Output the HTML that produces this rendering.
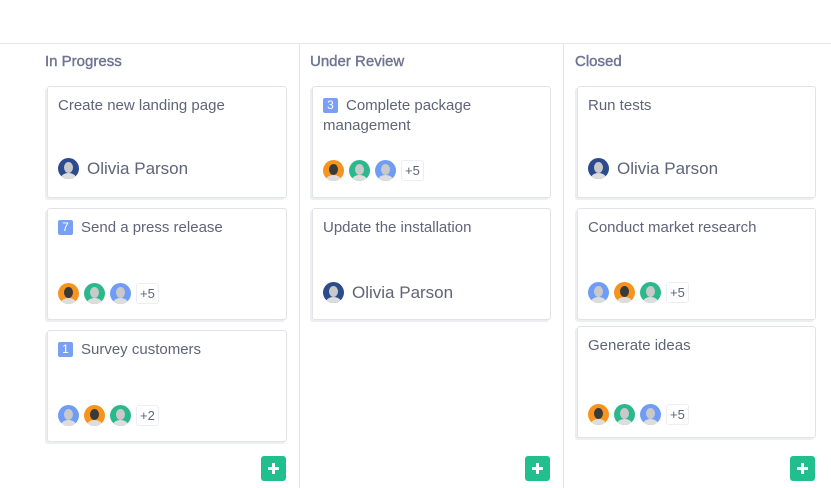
<!DOCTYPE html>
<html><head><style>
body{margin:0;width:831px;height:488px;background:#fff;font-family:"Liberation Sans",sans-serif;position:relative;overflow:hidden}
.top{position:absolute;left:0;top:43px;width:831px;height:1px;background:#e3e5ea}
.vl{position:absolute;top:44px;width:1px;height:444px;background:#e3e5ea}
.h{position:absolute;top:53px;font-size:15px;color:#6e7591;-webkit-text-stroke:0.4px #6e7591}
.c{position:absolute;background:#fff;border:1px solid #e1e3e8;border-radius:3px;box-shadow:-2px 2px 0 #eceef1;box-sizing:border-box}
.t{position:absolute;left:10px;top:9px;font-size:15px;color:#5f6478;line-height:20px;width:215px}
.b{display:inline-block;width:15px;height:15px;background:#7aa0f6;color:#fff;font-size:12px;line-height:15px;text-align:center;border-radius:2px;margin-right:8px;vertical-align:1px}
.a{display:inline-block;width:21px;height:21px;border-radius:50%;margin-right:5px;vertical-align:middle;position:relative;overflow:hidden}
.a::after{content:"";position:absolute;left:6px;top:4px;width:9px;height:11px;border-radius:50%;background:#3a3a3a}
.a::before{content:"";position:absolute;left:3px;top:15px;width:15px;height:10px;border-radius:50%;background:#ddd}
.o{background:#f7941d}.g{background:#2bb88c}.bl{background:#6f9cf6}.n{background:#2b4b8c}
.g::after,.bl::after,.n::after{background:#c9c9c9}
.p{display:inline-block;font-size:13px;color:#5f6478;border:1px solid #eceef1;border-radius:3px;padding:2px 3px;vertical-align:middle}
.nm{font-size:17px;color:#5f6478;vertical-align:middle;margin-left:3px}
.add{position:absolute;top:456px;width:25px;height:25px;background:#21bf8e;border-radius:3px}
.add::before{content:"";position:absolute;left:7px;top:11px;width:11px;height:3px;background:#fff}
.add::after{content:"";position:absolute;left:11px;top:7px;width:3px;height:11px;background:#fff}
</style></head><body>
<div class="top"></div>
<div class="vl" style="left:299px"></div>
<div class="vl" style="left:563px"></div>
<div class="h" style="left:45px">In Progress</div>
<div class="h" style="left:310px">Under Review</div>
<div class="h" style="left:575px">Closed</div>

<div class="c" style="left:47px;top:86px;width:240px;height:112px"><div class="t">Create new landing page</div><div style="position:absolute;left:10px;top:71px"><span class="a n"></span><span class="nm">Olivia Parson</span></div></div>
<div class="c" style="left:47px;top:208px;width:240px;height:112px"><div class="t"><span class="b">7</span>Send a press release</div><div style="position:absolute;left:10px;top:74px"><span class="a o"></span><span class="a g"></span><span class="a bl"></span><span class="p">+5</span></div></div>
<div class="c" style="left:47px;top:330px;width:240px;height:112px"><div class="t"><span class="b">1</span>Survey customers</div><div style="position:absolute;left:10px;top:74px"><span class="a bl"></span><span class="a o"></span><span class="a g"></span><span class="p">+2</span></div></div>

<div class="c" style="left:312px;top:86px;width:239px;height:112px"><div class="t"><span class="b">3</span>Complete package management</div><div style="position:absolute;left:10px;top:73px"><span class="a o"></span><span class="a g"></span><span class="a bl"></span><span class="p">+5</span></div></div>
<div class="c" style="left:312px;top:208px;width:239px;height:112px"><div class="t">Update the installation</div><div style="position:absolute;left:10px;top:73px"><span class="a n"></span><span class="nm">Olivia Parson</span></div></div>

<div class="c" style="left:577px;top:86px;width:239px;height:112px"><div class="t">Run tests</div><div style="position:absolute;left:10px;top:71px"><span class="a n"></span><span class="nm">Olivia Parson</span></div></div>
<div class="c" style="left:577px;top:208px;width:239px;height:112px"><div class="t">Conduct market research</div><div style="position:absolute;left:10px;top:73px"><span class="a bl"></span><span class="a o"></span><span class="a g"></span><span class="p">+5</span></div></div>
<div class="c" style="left:577px;top:326px;width:239px;height:112px"><div class="t">Generate ideas</div><div style="position:absolute;left:10px;top:77px"><span class="a o"></span><span class="a g"></span><span class="a bl"></span><span class="p">+5</span></div></div>

<div class="add" style="left:261px"></div>
<div class="add" style="left:525px"></div>
<div class="add" style="left:790px"></div>
</body></html>
